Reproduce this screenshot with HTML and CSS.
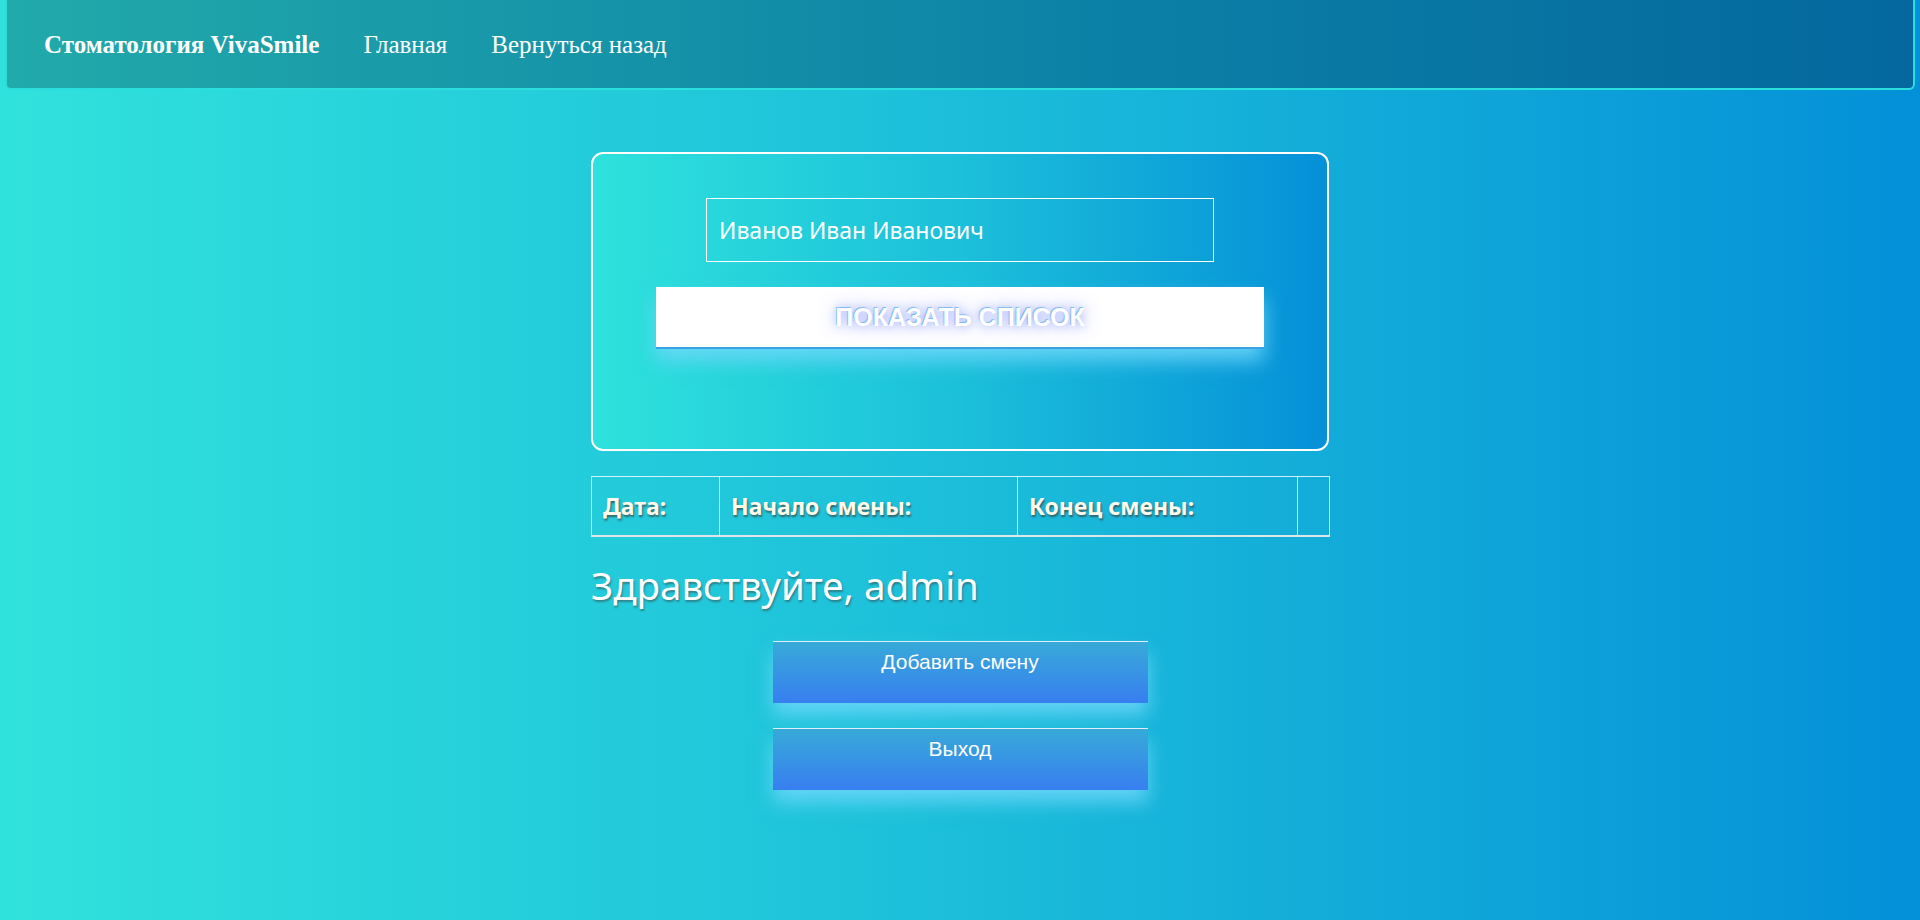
FILE: index.html
```html
<!DOCTYPE html>
<html lang="ru">
<head>
<meta charset="utf-8">
<title>Стоматология VivaSmile</title>
<link rel="stylesheet" href="styles.css">
</head>
<body>
<nav class="navbar">
  <a class="brand" href="#">Стоматология VivaSmile</a>
  <a class="nav-link" href="#">Главная</a>
  <a class="nav-link" href="#">Вернуться назад</a>
</nav>
<main class="container">
  <form class="search-card">
    <input class="name-input" type="text" value="Иванов Иван Иванович">
    <button class="show-btn" type="button">Показать список</button>
  </form>
  <table class="shifts">
    <colgroup>
      <col class="c1"><col class="c2"><col class="c3"><col class="c4">
    </colgroup>
    <thead>
      <tr><th>Дата:</th><th>Начало смены:</th><th>Конец смены:</th><th></th></tr>
    </thead>
  </table>
  <h2 class="greeting">Здравствуйте, admin</h2>
  <div class="actions">
    <button class="action-btn" type="button">Добавить смену</button>
    <button class="action-btn" type="button">Выход</button>
  </div>
</main>
</body>
</html>
```
FILE: styles.css
```css
* { box-sizing: border-box; }
html, body { margin: 0; padding: 0; }
body {
  min-height: 920px;
  background: linear-gradient(90deg, #30e2dc 0%, #1ec2da 45%, #0490d8 100%);
  font-family: "Noto Sans", "Open Sans", sans-serif;
  color: #fff;
}
.navbar {
  display: flex;
  align-items: center;
  gap: 44px;
  height: 90px;
  margin: 0 5px;
  padding-left: 37px;
  padding-top: 2px;
  background: linear-gradient(90deg, #21aaaa 0%, #0b7fa6 60%, #04689e 100%);
  border: 2px solid #2bdede;
  border-top: 0;
  border-radius: 0 0 6px 6px;
}
.navbar a {
  color: #fff;
  text-decoration: none;
  font-family: "Liberation Serif", "Times New Roman", serif;
  font-size: 25px;
}
.navbar .brand { font-weight: bold; }
.container {
  width: 738px;
  margin: 62px auto 0;
}
.search-card {
  display: flex;
  flex-direction: column;
  align-items: center;
  height: 299px;
  margin: 0;
  padding-top: 44px;
  border: 2px solid #fff;
  border-radius: 12px;
  background: linear-gradient(90deg, #2ee2dc 0%, #1cc0da 50%, #0590d8 100%);
}
.name-input {
  width: 508px;
  height: 64px;
  padding: 0 12px;
  background: transparent;
  border: 1px solid #fff;
  color: #fff;
  font-family: "Noto Sans", sans-serif;
  font-size: 23px;
  outline: none;
}
.show-btn {
  width: 608px;
  height: 62px;
  margin-top: 25px;
  background: #fff;
  border: 0;
  border-bottom: 2px solid #3aa2e2;
  box-shadow: 0 12px 18px rgba(110, 215, 250, 0.85);
  color: #fff;
  font-family: "Liberation Sans", Arial, sans-serif;
  font-weight: bold;
  font-size: 25px;
  text-transform: uppercase;
  text-shadow: -1px -1px 0 rgba(74, 166, 234, 0.6), 0 0 10px rgba(150, 165, 255, 0.9), 0 0 24px #b4beff;
}
.shifts {
  width: 738px;
  margin-top: 25px;
  border-collapse: collapse;
  table-layout: fixed;
}
.c1 { width: 128px; }
.c2 { width: 298px; }
.c3 { width: 280px; }
.c4 { width: 32px; }
.shifts th {
  height: 59px;
  padding: 0 11px;
  text-align: left;
  border: 1px solid rgba(255, 255, 255, 0.8);
  border-bottom: 2px solid #dfe6e8;
  color: #fffaea;
  font-size: 23px;
  font-weight: bold;
  text-shadow: 1px 2px 2px rgba(60, 60, 60, 0.7);
}
.greeting {
  margin: 24px 0 0;
  font-size: 38.5px;
  font-weight: normal;
  line-height: 48px;
  color: #fff;
  text-shadow: 1px 2px 2px rgba(60, 60, 60, 0.5);
}
.actions {
  display: flex;
  flex-direction: column;
  align-items: center;
  gap: 25px;
  margin-top: 32px;
}
.action-btn {
  width: 375px;
  height: 62px;
  padding: 8px 0 0;
  display: flex;
  justify-content: center;
  align-items: flex-start;
  background: linear-gradient(180deg, #37aad8 0%, #387ef0 100%);
  border: 0;
  border-top: 1px solid rgba(255, 255, 255, 0.85);
  box-shadow: 0 12px 18px rgba(110, 215, 250, 0.85);
  color: #fff;
  font-family: "Liberation Sans", Arial, sans-serif;
  font-size: 21px;
}
```
